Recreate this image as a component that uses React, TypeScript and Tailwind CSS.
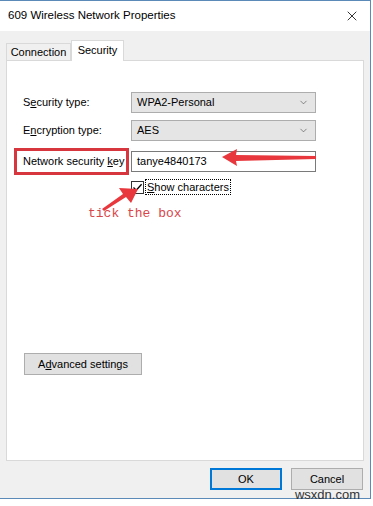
import { ChevronDown, X } from 'lucide-react';

const font = { fontFamily: '"Liberation Sans", Arial, sans-serif' };

function Select({ value }: { value: string }) {
  return (
    <div className="w-[185px] h-[21px] bg-[#e5e5e5] border border-[#adadad] flex items-center justify-between pl-[5px] pr-[6px] text-[11px] text-black">
      <span>{value}</span>
      <ChevronDown className="w-[11px] h-[11px] text-[#444]" strokeWidth={1.3} />
    </div>
  );
}

export default function App() {
  return (
    <div style={font} className="w-[373px] h-[506px] bg-white">
      <div className="w-[371px] h-[499px] border-t border-r border-b border-[#5b8ab8] bg-[#f0f0f0] flex flex-col">
        {/* title bar */}
        <div className="h-[30px] bg-white flex items-center justify-between pl-[8px] pr-[10px]">
          <span className="text-[11.5px] text-black">609 Wireless Network Properties</span>
          <X className="w-[16px] h-[16px] text-black" strokeWidth={1.2} />
        </div>

        <div className="px-[6px] pt-[8px] flex-1 flex flex-col">
          {/* tabs */}
          <div className="flex items-end h-[21px] relative z-10">
            <div className="h-[17px] w-[65px] border border-b-0 border-[#d9d9d9] bg-[#f0f0f0] text-[11px] flex items-center justify-center">
              Connection
            </div>
            <div className="h-[21px] w-[53px] pb-[2px] border border-b-0 border-[#d9d9d9] bg-white text-[11px] flex items-center justify-center -mb-px">
              Security
            </div>
          </div>

          {/* tab panel */}
          <div className="relative h-[401px] w-[358px] bg-white border border-[#d9d9d9] text-[11px] text-black">
            <div className="pt-[31px] pl-[16px] flex flex-col gap-[7px]">
              <div className="flex items-center">
                <span className="w-[108px]">
                  S<span className="underline">e</span>curity type:
                </span>
                <Select value="WPA2-Personal" />
              </div>
              <div className="flex items-center">
                <span className="w-[108px]">
                  E<span className="underline">n</span>cryption type:
                </span>
                <Select value="AES" />
              </div>
              <div className="flex items-center -ml-[9px]">
                <span className="w-[115px] h-[27px] border-[3px] border-[#d8363e] flex items-center pl-[6px] mr-[2px] whitespace-nowrap">
                  Network security&nbsp;<span className="underline">k</span>ey
                </span>
                <div className="w-[185px] h-[21px] border border-[#7a7a7a] bg-white flex items-center pl-[5px]">
                  tanye4840173
                </div>
              </div>
            </div>

            <div className="flex items-center ml-[124px] mt-[4px]">
              <div className="w-[13px] h-[13px] border border-[#333] bg-white flex items-center justify-center">
                <svg width="11" height="11" viewBox="0 0 11 11">
                  <path d="M1.5 5.5 L4.2 8.3 L9.6 2.2" fill="none" stroke="#000" strokeWidth="1.3" />
                </svg>
              </div>
              <span className="ml-[1px] border border-dotted border-black px-px leading-[14px]">
                <span className="underline">S</span>how characters
              </span>
            </div>

            <div
              className="ml-[81px] mt-[9px] text-[13px] text-[#d9464a]"
              style={{ fontFamily: '"Liberation Mono", "Courier New", monospace' }}
            >
              tick the box
            </div>

            <div className="absolute left-[17px] top-[292px]">
              <div className="w-[118px] h-[22px] bg-[#e1e1e1] border border-[#adadad] flex items-center justify-center">
                A<span className="underline">d</span>vanced settings
              </div>
            </div>

            {/* annotation arrows */}
            <svg className="absolute left-0 top-0 pointer-events-none" width="358" height="401">
              <polygon points="215,96 230,88 229,94 309,95 309,98 229,100 230,105" fill="#e8383d" />
              <polygon points="131,128 124,142 119,136 97,150 95,148 116,133 112,127" fill="#e8383d" />
            </svg>
          </div>

          {/* bottom buttons */}
          <div className="flex justify-end gap-[9px] pt-[7px] pr-[1px] relative">
            <div className="w-[72px] h-[22px] bg-[#e1e1e1] border-2 border-[#0078d7] flex items-center justify-center text-[11px]">
              OK
            </div>
            <div className="w-[72px] h-[22px] bg-[#e1e1e1] border border-[#adadad] flex items-center justify-center text-[11px]">
              Cancel
            </div>
            <span className="absolute right-[4px] top-[27px] text-[13px] text-[#333] leading-none">wsxdn.com</span>
          </div>
        </div>
      </div>
    </div>
  );
}
